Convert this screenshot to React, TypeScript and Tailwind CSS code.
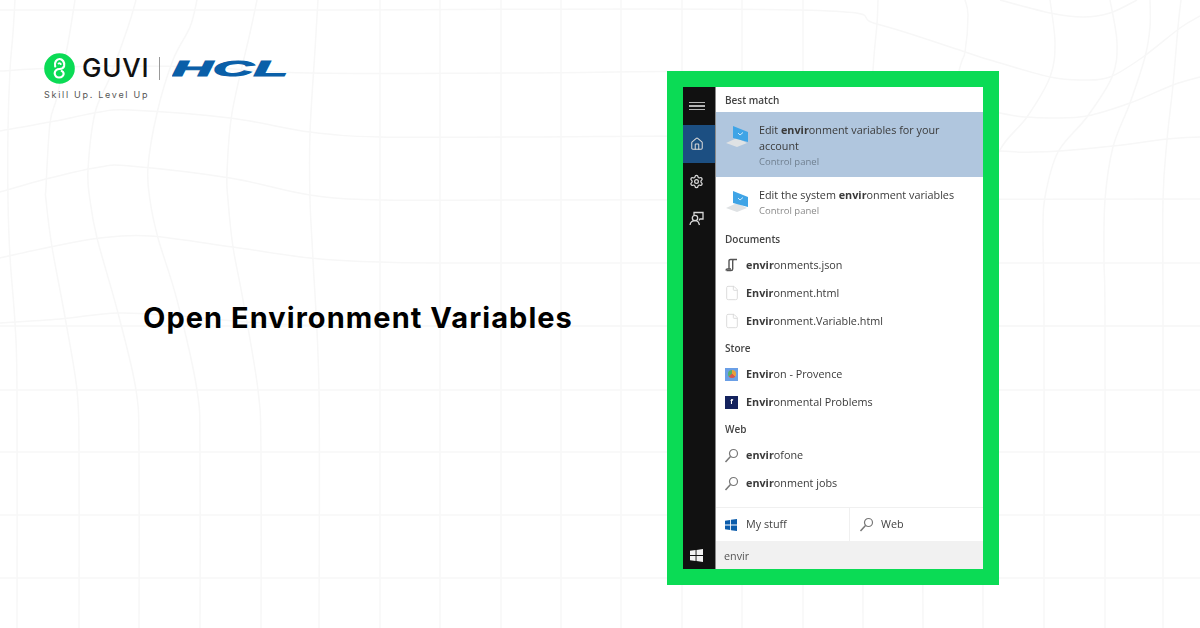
import type { ReactNode } from 'react';
import { File, House, Settings } from 'lucide-react';

type Pt = [number, number];

// warped grid lines of the page background, read off the reference
const flat = [326, 390, 452, 515, 578];
const straight = [380, 440, 501, 561, 621, 682, 742, 803];

const curves: Pt[][] = [
  [[0, 10], [300, 10], [800, 10], [877, 24], [965, 52], [990, 60], [1050, 77], [1083, 80], [1110, 77], [1143, 57], [1180, 28], [1200, 16]],
  [[1000, 0], [1050, 13], [1083, 17], [1110, 13], [1137, 0]],
  [[0, 71], [50, 68], [100, 66], [200, 67], [310, 73], [520, 73], [800, 72], [900, 90], [1000, 113], [1027, 117], [1053, 118], [1087, 116], [1130, 103], [1173, 85], [1200, 77]],
  [[0, 131], [50, 122], [100, 112], [130, 110], [230, 118], [310, 132], [380, 137], [520, 137], [800, 137], [1000, 151], [1033, 152], [1060, 151], [1113, 146], [1167, 139], [1200, 137]],
  [[0, 192], [50, 178], [100, 167], [130, 166], [230, 178], [310, 195], [380, 200], [520, 200], [1200, 199]],
  [[0, 258], [50, 247], [100, 238], [150, 236], [233, 247], [310, 258], [380, 262], [520, 263], [1200, 263]],
  [[0, 323], [60, 319], [118, 313], [180, 316], [300, 325], [520, 326], [1200, 326]],
  [[15, 0], [13, 33], [10, 70], [8, 130], [8, 200], [10, 257], [15, 323], [17, 390], [17, 628]],
  [[75, 0], [68, 43], [57, 97], [50, 123], [46, 187], [46, 200], [52, 247], [65, 317], [77, 390], [79, 452], [79, 628]],
  [[136, 0], [128, 27], [110, 77], [95, 113], [88, 170], [90, 200], [97, 238], [118, 313], [136, 390], [139, 452], [139, 628]],
  [[197, 0], [190, 27], [173, 60], [157, 113], [148, 167], [150, 200], [158, 238], [177, 300], [197, 390], [200, 452], [200, 628]],
  [[257, 0], [250, 33], [232, 113], [227, 173], [228, 200], [233, 247], [243, 300], [258, 390], [261, 452], [261, 628]],
  [[318, 0], [315, 50], [310, 133], [310, 200], [313, 260], [319, 390], [319, 628]],
  [[878, 0], [877, 24], [873, 70], [866, 200], [863, 390], [863, 628]],
  [[965, 0], [968, 15], [965, 52], [958, 75], [930, 200], [923, 390], [923, 628]],
  [[1050, 0], [1055, 43], [1050, 77], [1027, 117], [1000, 150], [985, 200], [983, 390], [983, 628]],
  [[1110, 0], [1117, 43], [1112, 77], [1087, 117], [1058, 152], [1045, 197], [1043, 233], [1044, 320], [1044, 628]],
  [[1150, 0], [1150, 27], [1145, 57], [1130, 103], [1113, 147], [1105, 200], [1104, 260], [1105, 320], [1105, 628]],
  [[1181, 0], [1178, 27], [1173, 85], [1167, 140], [1163, 200], [1163, 320], [1163, 628]],
];

// catmull-rom through the points
function smooth(p: Pt[]) {
  let d = `M${p[0][0]} ${p[0][1]}`;
  for (let i = 0; i < p.length - 1; i++) {
    const a = p[Math.max(i - 1, 0)];
    const b = p[i];
    const c = p[i + 1];
    const e = p[Math.min(i + 2, p.length - 1)];
    const c1x = b[0] + (c[0] - a[0]) / 6;
    const c1y = b[1] + (c[1] - a[1]) / 6;
    const c2x = c[0] - (e[0] - b[0]) / 6;
    const c2y = c[1] - (e[1] - b[1]) / 6;
    d += `C${c1x} ${c1y} ${c2x} ${c2y} ${c[0]} ${c[1]}`;
  }
  return d;
}

function GridBackground() {
  return (
    <svg className="absolute inset-0" width="1200" height="628" fill="none" stroke="#f7f7f7" strokeWidth="1.5">
      {curves.map((c, i) => (
        <path key={i} d={smooth(c)} />
      ))}
      {flat.map((y) => (
        <path key={y} d={`M0 ${y}H1200`} />
      ))}
      {straight.map((x) => (
        <path key={x} d={`M${x} 0V628`} />
      ))}
    </svg>
  );
}

function Logo() {
  return (
    <div className="flex flex-col">
      <div className="flex items-center h-[30px]">
        <svg width="31" height="31" viewBox="0 0 31 31" className="shrink-0">
          <circle cx="15.5" cy="15.5" r="15.3" fill="#0bdb55" />
          <path
            d="M11.2 13.500C10 9 12.800 6 15.500 6s5.500 3 4.600 7c-.5 2-2.400 3-4.600 3-2.800 0-4.800 1.800-4.800 4.300s2 4.200 4.300 4.200c2.800 0 5-2 4.600-4.200-.2-1-.9-1.800-1.900-2.200"
            fill="none"
            stroke="#fff"
            strokeWidth="2.200"
            strokeLinecap="round"
          />
          <path d="M14.500 10.500c1-.5 2-.3 2.300.6" fill="none" stroke="#fff" strokeWidth="1.800" strokeLinecap="round" />
        </svg>
        <span className="ml-[7px] text-[26px] leading-none font-medium text-[#111] font-['Inter',sans-serif] tracking-[0.03em]">GUVI</span>
        <div className="ml-[10px] w-px h-[23px] bg-[#999]" />
        <svg width="117" height="26" viewBox="0 0 117 26" className="ml-[12px]">
          <text
            x="0"
            y="21"
            textLength="116"
            lengthAdjust="spacingAndGlyphs"
            fontFamily="'Liberation Sans', sans-serif"
            fontWeight="700"
            fontStyle="italic"
            fontSize="22"
            fill="#0a5fa8"
            stroke="#0a5fa8"
            strokeWidth="1"
          >
            HCL
          </text>
        </svg>
      </div>
      <div className="mt-[6px] text-[9px] leading-[12px] text-[#555] tracking-[0.19em] font-['Inter',sans-serif]">Skill Up. Level Up</div>
    </div>
  );
}

function MonitorIcon() {
  return (
    <svg width="27" height="26" viewBox="0 0 27 26" className="mt-[2px] shrink-0">
      <path d="M2 19l11-5 10 5-10 4z" fill="#dfe2e4" />
      <path d="M9 2l15 6v10L9 14z" fill="#3fa4e6" />
      <path d="M14 9l2 2 3-2.500" stroke="#cfe9fb" strokeWidth="1" fill="none" />
    </svg>
  );
}

function WindowsIcon({ color, size }: { color: string; size: number }) {
  return (
    <svg width={size} height={size} viewBox="0 0 14 14" fill={color}>
      <path d="M0 2l6-.9v5.400H0zM7 1l7-1v6.500H7zM0 7.500h6v5.400L0 12zM7 7.500h7V14l-7-1z" />
    </svg>
  );
}

// magnifier with its handle to the lower left, as in the Windows 10 search list
function FindIcon() {
  return (
    <svg width="15" height="15" viewBox="0 0 15 15" fill="none" stroke="#777" strokeWidth="1.200" className="shrink-0">
      <circle cx="9.500" cy="5.500" r="4" />
      <path d="M6.500 8.500L1.500 14" strokeWidth="1.500" />
    </svg>
  );
}

function SectionHead({ label, h }: { label: string; h: string }) {
  return <div className={`${h} flex items-center pl-[9px] pt-[1px] text-[10px] font-semibold text-[#444]`}>{label}</div>;
}

function ListRow({ icon, bold, rest }: { icon: ReactNode; bold: string; rest: string }) {
  return (
    <div className="h-[28px] flex items-center pl-[9px]">
      <div className="w-[13px] h-[14px] flex items-center justify-center shrink-0">{icon}</div>
      <div className="ml-[8px] text-[10.800px] leading-[16px] text-[#3a3a3a]">
        <span className="font-bold">{bold}</span>
        {rest}
      </div>
    </div>
  );
}

const docIcon = <File className="w-[16px] h-[16px] shrink-0 text-[#d8d8d8]" strokeWidth={1.300} />;

function SearchPanel() {
  return (
    <div className="w-[332px] h-[514px] shrink-0 border-16 border-[#0bdb55] bg-white flex font-['Open_Sans',sans-serif] blur-[0.4px]">
      {/* Sidebar */}
      <div className="w-[33px] bg-[#111111] border-r border-[#8a8a8a] flex flex-col text-[#d8d8d8]">
        <div className="h-[38px] flex items-center justify-center pr-[5px]">
          <div className="w-[16px] flex flex-col gap-[2px]">
            <div className="h-[1.500px] bg-[#b5b5b5]" />
            <div className="h-[1.500px] bg-[#b5b5b5]" />
            <div className="h-[1.500px] bg-[#b5b5b5]" />
          </div>
        </div>
        <div className="h-[38px] bg-[#1c4f82] flex items-center justify-center pr-[5px]">
          <House className="w-[14px] h-[14px]" strokeWidth={1.800} />
        </div>
        <div className="h-[37px] flex items-center justify-center pr-[5px]">
          <Settings className="w-[15px] h-[15px]" strokeWidth={2} />
        </div>
        <div className="h-[37px] flex items-center justify-center pr-[5px]">
          <svg width="15" height="15" viewBox="0 0 15 15" fill="none" stroke="#d8d8d8" strokeWidth="1.300">
            <path d="M5 4V1.500h9V8H11l-1 1.500" />
            <circle cx="6" cy="7" r="2.700" />
            <path d="M1 14c.4-2.800 2.300-4.300 5-4.300 1.500 0 2.600.5 3.400 1.500L10.500 14" />
          </svg>
        </div>
        <div className="mt-auto h-[28px] flex items-center justify-center pr-[5px]">
          <WindowsIcon color="#f2f2f2" size={13} />
        </div>
      </div>

      {/* Results */}
      <div className="flex-1 flex flex-col min-w-0">
        <SectionHead label="Best match" h="h-[25px]" />
        <div className="h-[65px] bg-[#b0c6de] flex pt-[10px] pl-[8px]">
          <MonitorIcon />
          <div className="ml-[8px] flex flex-col w-[200px]">
            <span className="text-[10.800px] leading-[16px] text-[#3a3a3a]">
              Edit <span className="font-bold">envir</span>onment variables for your account
            </span>
            <span className="text-[9.500px] leading-[15px] text-[#6f7f8f]">Control panel</span>
          </div>
        </div>
        <div className="h-[50px] flex pt-[10px] pl-[8px]">
          <MonitorIcon />
          <div className="ml-[8px] flex flex-col">
            <span className="text-[10.800px] leading-[16px] text-[#3a3a3a]">
              Edit the system <span className="font-bold">envir</span>onment variables
            </span>
            <span className="text-[9.500px] leading-[15px] text-[#8a8a8a]">Control panel</span>
          </div>
        </div>

        <SectionHead label="Documents" h="h-[24px]" />
        <ListRow
          bold="envir"
          rest="onments.json"
          icon={
            <svg width="13" height="14" viewBox="0 0 13 14" fill="none" stroke="#555" strokeWidth="1.400">
              <path d="M4 11V3c0-1 .6-1.500 1.500-1.500H12M9 1.500c-1 0-1.300.7-1.300 1.500v8c0 1-.7 1.500-1.700 1.500H1.500" />
              <path d="M1 12.500c0-1 .5-1.500 1.500-1.500H6" />
            </svg>
          }
        />
        <ListRow bold="Envir" rest="onment.html" icon={docIcon} />
        <ListRow bold="Envir" rest="onment.Variable.html" icon={docIcon} />

        <SectionHead label="Store" h="h-[25px]" />
        <ListRow
          bold="Envir"
          rest="on - Provence"
          icon={
            <div className="w-[13px] h-[13px] bg-[#6a9fe6] flex items-center justify-center">
              <div className="w-[8px] h-[8px] rounded-full bg-[conic-gradient(#e8a13a_0_35%,#d9574a_35%_65%,#57b06a_65%_100%)]" />
            </div>
          }
        />
        <ListRow
          bold="Envir"
          rest="onmental Problems"
          icon={<div className="w-[13px] h-[13px] bg-[#14235e] flex items-center justify-center text-[7px] font-bold text-white">f</div>}
        />

        <SectionHead label="Web" h="h-[25px]" />
        <ListRow bold="envir" rest="ofone" icon={<FindIcon />} />
        <ListRow bold="envir" rest="onment jobs" icon={<FindIcon />} />

        <div className="flex-1" />
        <div className="h-[34px] border-t border-[#f0f0f0] flex">
          <div className="w-[134px] border-r border-[#f0f0f0] flex items-center pl-[9px]">
            <WindowsIcon color="#0b5cab" size={12} />
            <span className="ml-[9px] text-[10.800px] text-[#444]">My stuff</span>
          </div>
          <div className="flex-1 flex items-center pl-[9px]">
            <FindIcon />
            <span className="ml-[7px] text-[10.800px] text-[#444]">Web</span>
          </div>
        </div>
        <div className="h-[28px] bg-[#f1f1f1] flex items-center pl-[8px] pt-[2px] text-[10.800px] text-[#555]">envir</div>
      </div>
    </div>
  );
}

export default function App() {
  return (
    <div className="relative w-[1200px] h-[628px] overflow-hidden bg-white">
      <GridBackground />
      <div className="relative h-full flex">
        <div className="w-[667px] shrink-0 flex flex-col pl-[44px] pt-[53px]">
          <Logo />
          <h1 className="mt-[199px] ml-[99px] text-[29px] leading-[36px] font-bold tracking-[1.050px] text-black whitespace-nowrap font-['Inter',sans-serif]">
            Open Environment Variables
          </h1>
        </div>
        <div className="pt-[71px]">
          <SearchPanel />
        </div>
      </div>
    </div>
  );
}
